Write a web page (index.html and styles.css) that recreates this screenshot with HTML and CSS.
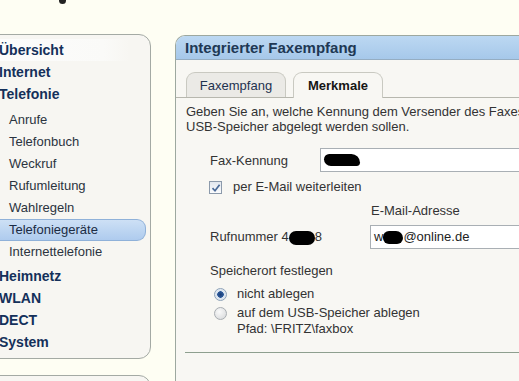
FILE: index.html
```html
<!DOCTYPE html>
<html lang="de">
<head>
    <meta charset="UTF-8">
    <title>Integrierter Faxempfang</title>
    <link rel="stylesheet" href="styles.css">
</head>
<body>
    <div class="top">
        <span class="logo-tail"></span>
    </div>
    <div class="layout">
        <aside class="sidebar">
            <nav class="menu">
                <a class="main" href="#">Übersicht</a>
                <a class="main" href="#">Internet</a>
                <a class="main" href="#">Telefonie</a>
                <div class="sub">
                    <a href="#">Anrufe</a>
                    <a href="#">Telefonbuch</a>
                    <a href="#">Weckruf</a>
                    <a href="#">Rufumleitung</a>
                    <a href="#">Wahlregeln</a>
                    <a class="active" href="#">Telefoniegeräte</a>
                    <a href="#">Internettelefonie</a>
                </div>
                <a class="main" href="#">Heimnetz</a>
                <a class="main" href="#">WLAN</a>
                <a class="main" href="#">DECT</a>
                <a class="main" href="#">System</a>
            </nav>
            <div class="menu second"></div>
        </aside>

        <main class="panel">
            <div class="panel-head">Integrierter Faxempfang</div>
            <div class="tabs">
                <span class="tab">Faxempfang</span>
                <span class="tab current">Merkmale</span>
            </div>
            <div class="panel-body">
                <p class="desc">Geben Sie an, welche Kennung dem Versender des Faxes angezeigt wird und ob die Faxe per E-Mail weitergeleitet oder auf dem<br>USB-Speicher abgelegt werden sollen.</p>

                <div class="row">
                    <label class="lbl short">Fax-Kennung</label>
                    <div class="field"><span class="blot b1"></span></div>
                </div>

                <div class="check-row">
                    <span class="checkbox">
                        <svg width="10" height="10" viewBox="0 0 10 10"><path d="M1.5 5.2 L4 7.8 L8.6 1.8" fill="none" stroke="#4a6a98" stroke-width="1.7"/></svg>
                    </span>
                    <span>per E-Mail weiterleiten</span>
                </div>

                <div class="mail-label">E-Mail-Adresse</div>

                <div class="row">
                    <label class="lbl long">Rufnummer 4<span class="blot b2"></span>8</label>
                    <div class="field">w<span class="blot b3"></span>@online.de</div>
                </div>

                <div class="store">Speicherort festlegen</div>
                <div class="radio-row">
                    <span class="radio on"></span>
                    <span>nicht ablegen</span>
                </div>
                <div class="radio-row">
                    <span class="radio"></span>
                    <span>auf dem USB-Speicher ablegen<br>Pfad: \FRITZ\faxbox</span>
                </div>

                <hr class="sep">
            </div>
        </main>
    </div>
</body>
</html>
```

FILE: styles.css
```css
body {
    margin: 0;
    background-color: #fefef3;
    font-family: "Liberation Sans", Arial, sans-serif;
    font-size: 13px;
    color: #333;
    overflow: hidden;
    height: 381px;
}

.top {
    height: 34px;
}

.logo-tail {
    display: block;
    width: 7px;
    height: 4px;
    margin-left: 59px;
    background: #222;
    border-radius: 0 0 4px 4px;
}

.layout {
    display: flex;
    gap: 24px;
}

.sidebar {
    width: 163px;
    margin-left: -12px;
    flex-shrink: 0;
}

.menu {
    display: flex;
    flex-direction: column;
    background-color: #f7f6f2;
    border: 1px solid #a4aaa4;
    border-radius: 12px;
    padding: 4px 0 5px 10px;
}

.menu a {
    text-decoration: none;
    line-height: 22px;
    height: 22px;
}

.menu .main {
    font-size: 14px;
    font-weight: bold;
    color: #14305a;
}

.menu .main:first-child {
    background: linear-gradient(to right, #fcfcfb 0%, #fafaf8 80%, rgba(247,246,242,0) 100%);
    margin-right: 20px;
}

.sub {
    display: flex;
    flex-direction: column;
    margin: 4px 0 2px -10px;
}

.sub a {
    padding-left: 20px;
    color: #2b3440;
    margin-right: 4px;
}

.sub a.active {
    background: linear-gradient(#cde0f5, #aecbee);
    border: 1px solid #8fb1d9;
    border-left: none;
    border-radius: 0 9px 9px 0;
    height: 20px;
    line-height: 20px;
    color: #1b2c44;
}

.menu.second {
    margin-top: 16px;
    height: 40px;
}

.panel {
    width: 400px;
    flex-shrink: 0;
    margin-top: 1px;
    min-height: 360px;
    background-color: #f8f7f3;
    border: 1px solid #9da89f;
    border-right: none;
    border-radius: 10px 0 0 0;
}

.panel-head {
    height: 23px;
    line-height: 23px;
    padding-left: 9px;
    background: linear-gradient(#bcd8f2, #a6c8ea);
    border-bottom: 1px solid #95adc2;
    border-radius: 9px 0 0 0;
    font-size: 15px;
    font-weight: bold;
    color: #203854;
}

.tabs {
    display: flex;
    align-items: flex-end;
    gap: 7px;
    margin-top: 12px;
    padding-left: 10px;
    border-bottom: 1px solid #b7b7ae;
}

.tab {
    width: 98px;
    height: 24px;
    line-height: 25px;
    text-align: center;
    background-color: #ebeae6;
    border: 1px solid #c9c9c1;
    border-bottom: none;
    border-radius: 9px 9px 0 0;
    color: #1e3250;
}

.tab.current {
    width: 88px;
    height: 25px;
    margin-bottom: -1px;
    background-color: #f8f7f3;
    font-weight: bold;
    color: #151515;
}

.panel-body {
    padding-left: 10px;
}

.desc {
    margin: 6px 0 0;
    line-height: 15px;
    white-space: nowrap;
}

.row {
    display: flex;
    align-items: center;
    margin-top: 14px;
    padding-left: 24px;
}

.lbl {
    flex-shrink: 0;
}

.lbl.short {
    width: 110px;
}

.lbl.long {
    width: 160px;
}

.field {
    flex: 1;
    height: 22px;
    line-height: 22px;
    padding-left: 3px;
    background-color: #fff;
    border: 1px solid #a9afb4;
    border-right: none;
    color: #222;
}

.blot {
    display: inline-block;
    background-color: #000;
    vertical-align: middle;
}

.b1 {
    width: 36px;
    height: 12px;
    border-radius: 6px 10px 4px 8px;
    margin-top: -2px;
}

.b2 {
    width: 26px;
    height: 14px;
    border-radius: 7px;
}

.b3 {
    width: 20px;
    height: 13px;
    border-radius: 6px 7px 6px 6px;
}

.row + .check-row {
    margin-top: 7px;
}

.check-row, .radio-row {
    display: flex;
    align-items: flex-start;
    line-height: 16px;
    padding-left: 23px;
}

.checkbox {
    display: flex;
    align-items: center;
    justify-content: center;
    width: 11px;
    height: 11px;
    margin: 2px 11px 0 0;
    border: 1px solid #8c9aab;
    background: linear-gradient(#e2e7ee, #fbfcfd);
}

.mail-label {
    margin-top: 8px;
    padding-left: 185px;
    line-height: 16px;
}

.mail-label + .row {
    margin-top: 6px;
}

.store {
    margin-top: 14px;
    padding-left: 24px;
    line-height: 16px;
}

.radio-row {
    padding-left: 28px;
    margin-top: 3px;
}

.store + .radio-row {
    margin-top: 7px;
}

.radio {
    width: 11px;
    height: 11px;
    margin: 2px 10px 0 0;
    border-radius: 50%;
    border: 1px solid #a8adb2;
    background: radial-gradient(circle at 40% 35%, #fafafa, #d4d6d8);
    flex-shrink: 0;
}

.radio.on {
    border-color: #8fa3b8;
    background: radial-gradient(circle, #1c3f78 0, #2d5a9a 3px, #d9e3ee 3.5px, #eef2f6 100%);
}

.sep {
    margin: 15px 0 0 -1px;
    border: none;
    border-top: 1px solid #8e9f8f;
}
```
